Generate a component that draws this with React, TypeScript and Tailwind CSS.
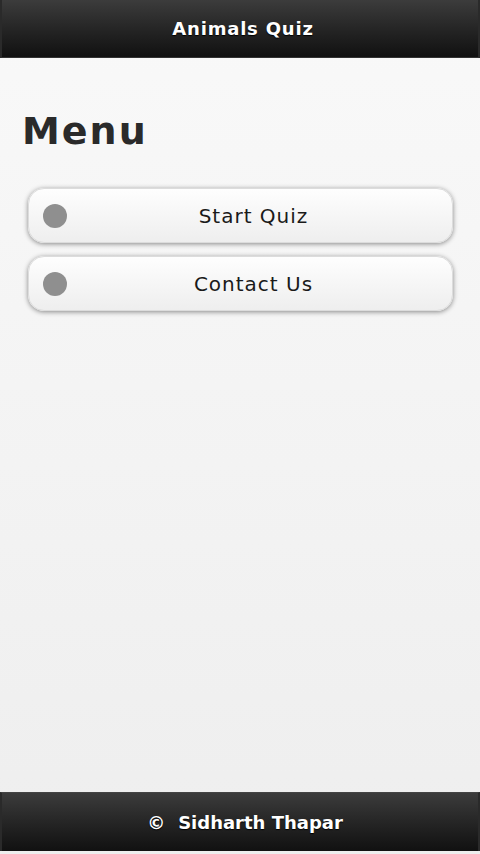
import React from "react";

export default function App() {
  const items = ["Start Quiz", "Contact Us"];
  return (
    <div
      className="w-[480px] h-[854px] flex flex-col bg-gradient-to-b from-[#f9f9f9] to-[#eeeeee] overflow-hidden"
      style={{ fontFamily: '"DejaVu Sans", Verdana, sans-serif' }}
    >
      <div className="h-[58px] shrink-0 flex items-center justify-center bg-gradient-to-b from-[#3c3c3c] to-[#111111] border-b border-[#333] border-x-2 border-x-[#2a2a2a]">
        <span className="text-white font-bold text-[18px] tracking-[0.8px] ml-[6px] [text-shadow:0_1px_1px_#000]">
          Animals Quiz
        </span>
      </div>
      <div className="flex-1 flex flex-col px-[28px]">
        <h1 className="mt-[50px] ml-[-6px] text-[38px] leading-[46px] font-bold text-[#2a2a2a] tracking-[2px]">
          Menu
        </h1>
        <div className="mt-[34px] flex flex-col gap-[13px]">
          {items.map((t) => (
            <div
              key={t}
              className="relative h-[55px] w-[425px] rounded-[16px] bg-gradient-to-b from-[#fefefe] to-[#eeeeee] border border-[#dcdcdc] shadow-[0_1px_5px_rgba(0,0,0,0.45)] flex items-center justify-center"
            >
              <span className="absolute left-[14px] top-1/2 -translate-y-1/2 w-[24px] h-[24px] rounded-full bg-[#8f8f8f]" />
              <span className="text-[20px] text-[#1a1a1a] tracking-[1px] ml-[26px]">{t}</span>
            </div>
          ))}
        </div>
      </div>
      <div className="h-[59px] shrink-0 flex items-center justify-center bg-gradient-to-b from-[#3c3c3c] to-[#111111] border-t border-[#444] border-x-2 border-x-[#2a2a2a] mb-[3px]">
        <span className="text-white font-bold text-[18px] ml-[10px] [text-shadow:0_1px_1px_#000]">
          <span className="mr-[13px]">©</span>Sidharth Thapar
        </span>
      </div>
    </div>
  );
}
